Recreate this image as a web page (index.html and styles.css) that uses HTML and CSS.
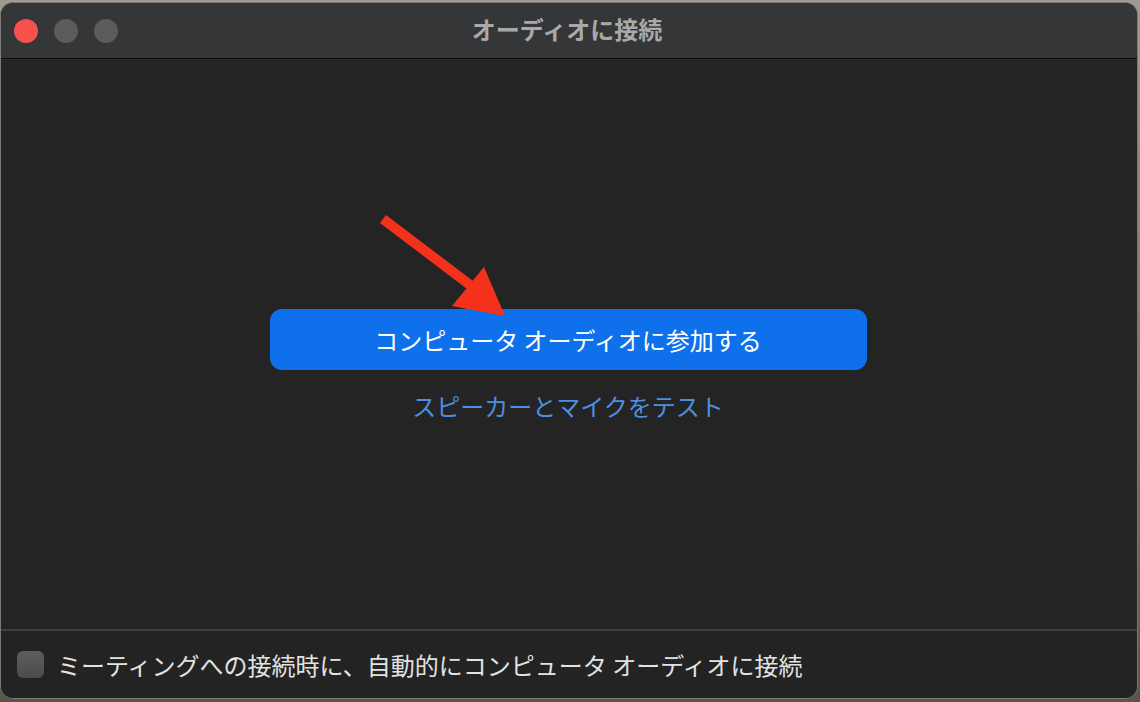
FILE: index.html
```html
<!DOCTYPE html>
<html lang="ja">
<head>
<meta charset="utf-8">
<title>オーディオに接続</title>
<link rel="stylesheet" href="styles.css">
</head>
<body>
<div class="window">
  <header class="titlebar">
    <div class="lights">
      <span class="light red"></span>
      <span class="light grey"></span>
      <span class="light grey"></span>
    </div>
    <div class="title">オーディオに接続</div>
  </header>
  <main class="content">
    <button class="join">コンピュータ オーディオに参加する</button>
    <a class="test" href="#">スピーカーとマイクをテスト</a>
  </main>
  <footer class="footer">
    <span class="checkbox"></span>
    <span class="label">ミーティングへの接続時に、自動的にコンピュータ オーディオに接続</span>
  </footer>
  <svg class="arrow" width="1138" height="697" viewBox="0 0 1138 697">
    <line x1="383" y1="217" x2="478" y2="289" stroke="#f4321b" stroke-width="10" stroke-linecap="butt"/>
    <polygon points="452,304 484,265 505,314" fill="#f4321b"/>
  </svg>
</div>
</body>
</html>
```
FILE: styles.css
```css
html, body {
  margin: 0;
  padding: 0;
}
body {
  width: 1140px;
  height: 702px;
  background: linear-gradient(#a29a8c, #5d5448);
  overflow: hidden;
  font-family: "Noto Sans CJK JP", "Noto Sans", sans-serif;
}
.window {
  position: relative;
  box-sizing: border-box;
  width: 1138px;
  height: 697px;
  margin: 2px 2px 3px 0;
  border: 1px solid #7a7a7a;
  border-radius: 13px;
  background: #242424;
  overflow: hidden;
  display: flex;
  flex-direction: column;
}
.titlebar {
  position: relative;
  height: 55px;
  flex: none;
  background: #353637;
  border-bottom: 1px solid #0c0c0c;
  display: flex;
  align-items: center;
}
.lights {
  display: flex;
  gap: 16px;
  padding-left: 13px;
  padding-top: 0;
}
.light {
  width: 24px;
  height: 24px;
  border-radius: 50%;
  display: block;
}
.red { background: #f6514b; }
.grey { background: #5b5c5d; }
.title {
  position: absolute;
  left: 0;
  right: 0;
  top: 0;
  bottom: 0;
  display: flex;
  align-items: center;
  justify-content: center;
  color: #a9a9a9;
  font-size: 24px;
  font-weight: 700;
  padding-bottom: 5px;
  padding-right: 4px;
  pointer-events: none;
}
.content {
  flex: 1;
  display: flex;
  flex-direction: column;
  align-items: center;
  padding-top: 249px;
  border-top: 1px solid #2a2a2a;
  box-sizing: border-box;
}
.join {
  width: 597px;
  height: 61px;
  margin-right: 2px;
  border: none;
  border-radius: 12px;
  background: #0e71eb;
  color: #ffffff;
  font-family: inherit;
  font-size: 24px;
  padding: 0;
}
.test {
  margin-top: 20px;
  margin-right: 2px;
  color: #4d8fe0;
  font-size: 24px;
  line-height: 32px;
  text-decoration: none;
}
.footer {
  flex: none;
  height: 67px;
  border-top: 2px solid #3f3f3f;
  background: #232323;
  display: flex;
  align-items: center;
  padding-left: 16px;
  gap: 13px;
}
.checkbox {
  width: 27px;
  height: 27px;
  border-radius: 6px;
  background: linear-gradient(#5e5e5e, #4b4b4b);
  display: block;
}
.label {
  color: #e2e2e2;
  font-size: 24px;
}
.arrow {
  position: absolute;
  left: -1px;
  top: -1px;
  pointer-events: none;
}
```
